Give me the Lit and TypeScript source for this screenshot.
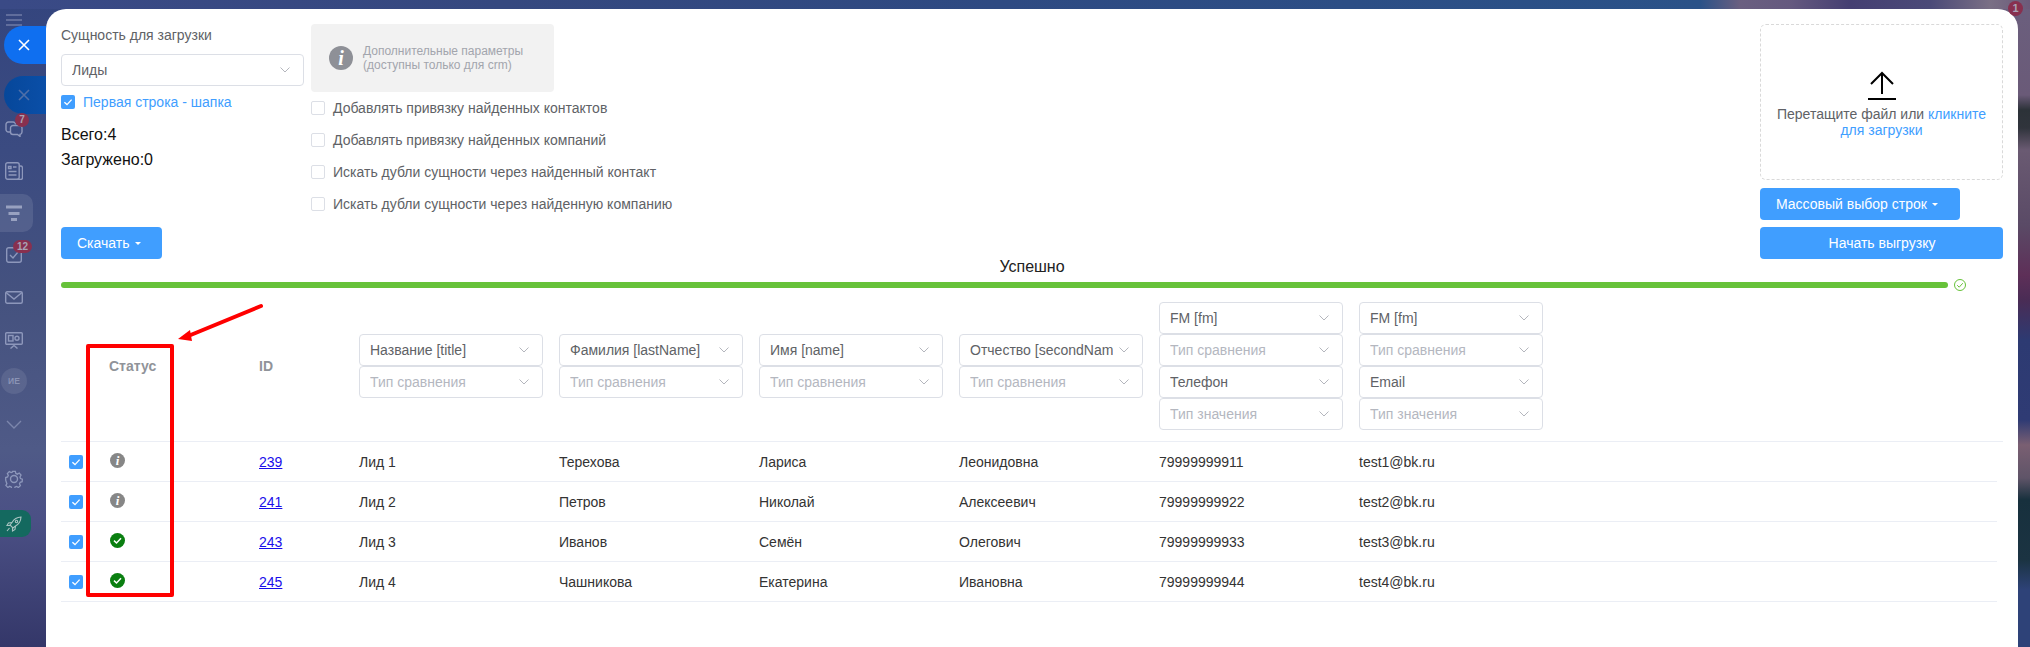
import { LitElement, html, css, svg } from "lit";
import { customElement } from "lit/decorators.js";

const chevron = html`<svg class="chev" width="10" height="6" viewBox="0 0 10 6"><path d="M.5.5 5 5 9.5.5" fill="none" stroke="#b4b6bd" stroke-width="1"/></svg>`;
const checkMark = html`<svg width="14" height="14" viewBox="0 0 14 14"><path d="M3.4 7.2 6 9.6l4.6-5" fill="none" stroke="#fff" stroke-width="1.3"/></svg>`;
const caret = html`<span class="caret"></span>`;

const sel = (text: string, ph = false) =>
  html`<div class="sel ${ph ? "ph" : ""}"><span class="sel-t">${text}</span>${chevron}</div>`;

const rows = [
  ["239", "Лид 1", "Терехова", "Лариса", "Леонидовна", "79999999911", "test1@bk.ru", "info"],
  ["241", "Лид 2", "Петров", "Николай", "Алексеевич", "79999999922", "test2@bk.ru", "info"],
  ["243", "Лид 3", "Иванов", "Семён", "Олегович", "79999999933", "test3@bk.ru", "ok"],
  ["245", "Лид 4", "Чашникова", "Екатерина", "Ивановна", "79999999944", "test4@bk.ru", "ok"],
];

const sideStroke = "#8d97bb";
const ic = (w: number, h: number, body: unknown) =>
  html`<svg width=${w} height=${h} viewBox="0 0 ${w} ${h}" fill="none" stroke=${sideStroke} stroke-width="1.4">${body}</svg>`;

@customElement("app-root")
export class AppRoot extends LitElement {
  static styles = css`
    :host {
      display: block;
      position: relative;
      width: 100%;
      height: 647px;
      overflow: hidden;
      font-family: "Liberation Sans", Arial, sans-serif;
      font-size: 14px;
      color: #606266;
      background:
        linear-gradient(90deg, #3a4a86 0, #35487f 500px, #2e4a82 1000px, #2a5288 1700px, #6a5f80 1740px, #65597f 1790px, #453f72 1850px, #4b4a78 1930px, #7a6f85 1990px, #6b5a7a 2030px) top / 100% 9px no-repeat,
        linear-gradient(180deg, #6b5f7e 0, #6a5a78 95px, #2c3238 110px, #30343c 128px, #6a5a72 150px, #5a4a66 225px, #5e2f58 275px, #4a2c55 300px, #2d3a72 340px, #2f3b74 420px, #7a5f72 445px, #5f5468 478px, #17303d 500px, #1b3342 560px, #2e4278 590px, #2e4278 647px) right top / 40px 100% no-repeat,
        linear-gradient(180deg, #34457e 0, #3b4b81 150px, #45527f 300px, #4f5a87 450px, #4b5085 520px, #343769 647px) left top / 80px 100% no-repeat,
        #30487f;
    }
    .wrap { display: flex; height: 647px; }

    /* sidebar */
    .side { width: 46px; flex: none; display: flex; flex-direction: column; align-items: flex-start; }
    .it { width: 28px; display: flex; align-items: center; justify-content: center; position: relative; flex: none; box-sizing: border-box; }
    .burger { margin-top: 14px; height: 12px; }
    .pill { width: 42px; height: 38px; margin-left: 4px; border-radius: 19px 0 0 19px; display: flex; align-items: center; justify-content: center; padding-right: 2px; box-sizing: border-box; flex: none; }
    .pill1 { background: #0f6ff0; }
    .pill2 { background: linear-gradient(90deg, #06479a, #0a4fa8); margin-top: 12px; }
    .i-chat { height: 30px; }
    .i-news { height: 50px; padding-top: 4px; }
    .tile { height: 38px; width: 33px; background: rgba(255, 255, 255, 0.1); border-radius: 0 10px 10px 0; display: flex; align-items: center; padding-left: 5px; box-sizing: border-box; flex: none; }
    .i-task { height: 46px; }
    .i-mail { height: 38px; }
    .i-board { height: 48px; }
    .avatar { width: 26px; height: 26px; margin: 4px 0 0 1px; border-radius: 50%; background: rgba(255, 255, 255, 0.09); color: #8a93b4; font-size: 8.5px; font-weight: 700; display: flex; align-items: center; justify-content: center; flex: none; }
    .i-chev { height: 60px; }
    .i-gear { height: 50px; }
    .rocket { width: 31px; height: 27px; margin-top: 6px; background: #14695f; border-radius: 0 9px 9px 0; display: flex; align-items: center; padding-left: 6px; box-sizing: border-box; flex: none; }
    .bdg { position: absolute; background: #88304f; color: #a9a3b5; border-radius: 8px; font-size: 10px; font-weight: 700; height: 14px; min-width: 14px; line-height: 14px; text-align: center; box-sizing: border-box; }
    .b7 { left: 15px; top: -1px; }
    .b12 { left: 13px; top: 8px; min-width: 19px; height: 13px; line-height: 13px; }
    .b1 { left: 2008px; top: 1px; width: 15px; height: 15px; line-height: 15px; border-radius: 50%; font-size: 11px; }

    /* panel */
    .panel {
      width: 1972px;
      flex: none;
      margin-top: 9px;
      height: 638px;
      background: #fff;
      border-radius: 20px 20px 0 0;
      padding: 15px 15px 0;
      box-sizing: border-box;
      position: relative;
    }
    .top { display: flex; height: 235px; }
    .c-left { width: 243px; display: flex; flex-direction: column; flex: none; }
    .c-mid { width: 420px; margin-left: 7px; flex: none; }
    .c-right { width: 243px; margin-left: auto; display: flex; flex-direction: column; flex: none; }
    .lbl { height: 22px; line-height: 22px; margin-bottom: 8px; }
    .sel {
      height: 32px;
      box-sizing: border-box;
      border: 1px solid #dcdfe6;
      border-radius: 4px;
      padding: 0 13px 0 10px;
      display: flex;
      align-items: center;
      justify-content: space-between;
      color: #606266;
      background: #fff;
    }
    .sel.ph { color: #b4b7bf; }
    .sel-t { width: 143px; overflow: hidden; white-space: nowrap; }
    .chev { flex: none; }
    .cb { width: 14px; height: 14px; box-sizing: border-box; border: 1px solid #dcdfe6; border-radius: 2px; background: #fff; flex: none; display: block; }
    .cb.on { background: #409eff; border: none; }
    .head-cb { display: flex; align-items: center; gap: 8px; margin-top: 9px; height: 14px; color: #409eff; }
    .stat { font-size: 16px; color: #111; line-height: 25px; }
    .stats { margin-top: 13px; }
    .btn { height: 32px; box-sizing: border-box; border-radius: 4px; background: #409eff; color: #fff; display: flex; align-items: center; flex: none; }
    .b-dl { margin-top: auto; width: 101px; padding-left: 16px; }
    .b-mass { width: 200px; padding-left: 16px; margin-top: 8px; }
    .b-start { justify-content: center; margin-top: 7px; padding-left: 1px; }
    .caret { width: 0; height: 0; border-left: 3px solid transparent; border-right: 3px solid transparent; border-top: 3px solid #fff; margin-left: 5px; }
    .info {
      width: 243px; height: 68px; background: #f2f2f2; border-radius: 4px;
      display: flex; align-items: center; padding-left: 18px; box-sizing: border-box; gap: 10px;
      font-size: 12px; line-height: 14px; color: #a2a5ad;
    }
    .ibig { width: 24px; height: 24px; border-radius: 50%; background: #8e9097; color: #fff; font: italic 700 20px/24px "Liberation Serif", serif; text-align: center; flex: none; }
    .chk { height: 32px; display: flex; align-items: center; gap: 8px; white-space: nowrap; }
    .drop {
      height: 156px; border: 1px dashed #d9d9d9; border-radius: 6px; box-sizing: border-box;
      display: flex; flex-direction: column; align-items: center; padding: 45px 10px 0; text-align: center; line-height: 16px;
    }
    .drop svg { margin-bottom: 6px; display: block; flex: none; }
    .lnk { color: #409eff; }
    .ptext { text-align: center; color: #222; line-height: 16px; height: 16px; font-size: 16px; }
    .prog { display: flex; align-items: center; margin-top: 7px; height: 6px; }
    .bar { width: 1887px; height: 6px; border-radius: 3px; background: #67c23a; flex: none; }
    .prog svg { margin-left: 6px; overflow: visible; }

    .hdr, .row { display: grid; grid-template-columns: 48px 150px 100px repeat(5, 200px) 1fr; align-items: center; }
    .hdr { padding: 14px 0 11px; border-bottom: 1px solid #ebeef5; }
    .ht { font-weight: 700; color: #909399; }
    .stack { width: 184px; }
    .row { height: 40px; box-sizing: border-box; border-bottom: 1px solid #ebeef5; margin-right: 6px; color: #333; }
    .row .cb { margin-left: 8px; margin-top: 1px; }
    .st { width: 15px; height: 15px; border-radius: 50%; margin: 0 0 3px 1px; display: flex; align-items: center; justify-content: center; }
    .st.info-i { background: #868686; color: #fff; font: italic 700 13px/15px "Liberation Serif", serif; }
    .st.ok { background: #0a7f10; }
    a { color: #1a0dea; text-decoration: underline; }

    .redbox { position: absolute; left: 86px; top: 344px; width: 88px; height: 253px; border: 4px solid #f00; border-radius: 2px; box-sizing: border-box; }
    .arrow { position: absolute; left: 170px; top: 300px; }
  `;

  render() {
    return html`
      <div class="wrap">
        <aside class="side">
          <div class="it burger">
            ${ic(16, 12, svg`<path d="M0 1h16M0 6h16M0 11h16" stroke="#6f7ba6"/>`)}
          </div>
          <div class="pill pill1">
            <svg width="12" height="12" viewBox="0 0 12 12"><path d="M1 1l10 10M11 1 1 11" stroke="#fff" stroke-width="1.6"/></svg>
          </div>
          <div class="pill pill2">
            <svg width="12" height="12" viewBox="0 0 12 12"><path d="M1 1l10 10M11 1 1 11" stroke="#4f6fa8" stroke-width="1.6"/></svg>
          </div>
          <div class="it i-chat">
            ${ic(18, 16, svg`<path d="M5 11H3.500A2.500 2.500 0 0 1 1 8.500V3.500A2.500 2.500 0 0 1 3.500 1H8a2.500 2.500 0 0 1 2.500 2.500"/><path d="M8 4.500h6.500a2.500 2.500 0 0 1 2.500 2.500v4a2.500 2.500 0 0 1-2 2.400V15.500l-2.500-2H8a2.500 2.500 0 0 1-2.500-2.500V7A2.500 2.500 0 0 1 8 4.500z"/>`)}
            <span class="bdg b7">7</span>
          </div>
          <div class="it i-news">
            ${ic(18, 18, svg`<rect x=".7" y=".7" width="13.500" height="16.600" rx="2"/><path d="M14.200 4h1.300a2 2 0 0 1 2 2v9.500a2 2 0 0 1-2 2H12M3.500 4.500h2.500v2H3.500zM8 5h3.500M3.500 9.500h8M3.500 13h8"/>`)}
          </div>
          <div class="tile">
            <svg width="18" height="16" viewBox="0 0 18 16"><path d="M1 2h16M3.500 8.500h11M6 14.500h6" stroke="#98a1c0" stroke-width="3"/></svg>
          </div>
          <div class="it i-task">
            ${ic(16, 16, svg`<rect x=".7" y=".7" width="14.600" height="14.600" rx="2"/><path d="M4 8l3 3 5-6"/>`)}
            <span class="bdg b12">12</span>
          </div>
          <div class="it i-mail">
            ${ic(18, 13, svg`<rect x=".7" y=".7" width="16.600" height="11.600" rx="1.500"/><path d="M1 1.500 9 8l8-6.500"/>`)}
          </div>
          <div class="it i-board">
            ${ic(18, 17, svg`<rect x=".7" y=".7" width="16.600" height="11.600" rx="1"/><rect x="3.500" y="3.500" width="4.500" height="5.500"/><circle cx="12" cy="6.300" r="2"/><path d="M9 12.500v1M5.500 16.500 9 13.500l3.500 3"/>`)}
          </div>
          <div class="avatar">ИЕ</div>
          <div class="it i-chev">
            ${ic(16, 9, svg`<path d="M1 1l7 7 7-7" stroke="#7c86ac"/>`)}
          </div>
          <div class="it i-gear">
            ${ic(18, 18, svg`<circle cx="9" cy="9" r="3.500"/><path d="M7.500 1h3l.5 2.300 1.700.8 2-1.200 2 2.300-1.200 2 .6 1.600 2 .7l-.2 2.800-2.100.6-.8 1.700 1 2-2.200 2-1.900-1.200-1.700.6-.6 2.100h-3l-.6-2.100-1.700-.7-1.900 1.200-2.200-2.100 1.100-2-.7-1.700L0 10.500V7.800l2.100-.7.700-1.700-1-2 2.100-2.100 2 1.100 1.200-.5z" transform="translate(0.700 0.400) scale(.92)"/>`)}
          </div>
          <div class="rocket">
            <svg width="16" height="16" viewBox="0 0 16 16" fill="none" stroke="#a9c4c2" stroke-width="1.100"><path d="M15 1c-4 .2-7 2-9 5.500L4 9l3 3 2.500-2C13 8 14.800 5 15 1z"/><circle cx="10.500" cy="5.500" r="1.200"/><path d="M6 6.500 2.500 7 1 9.500 4 9.500M9.500 10 9 13.500 6.500 15V12M3.500 12 1 15"/></svg>
          </div>
        </aside>

        <main class="panel">
          <div class="top">
            <div class="c-left">
              <div class="lbl">Сущность для загрузки</div>
              ${sel("Лиды")}
              <div class="head-cb"><span class="cb on">${checkMark}</span>Первая строка - шапка</div>
              <div class="stats">
                <div class="stat">Всего:4</div>
                <div class="stat">Загружено:0</div>
              </div>
              <div class="btn b-dl">Скачать${caret}</div>
            </div>
            <div class="c-mid">
              <div class="info"><span class="ibig">i</span><div>Дополнительные параметры<br />(доступны только для crm)</div></div>
              ${["Добавлять привязку найденных контактов", "Добавлять привязку найденных компаний", "Искать дубли сущности через найденный контакт", "Искать дубли сущности через найденную компанию"].map(
                (t) => html`<div class="chk"><span class="cb"></span>${t}</div>`
              )}
            </div>
            <div class="c-right">
              <div class="drop">
                <svg width="30" height="30" viewBox="0 0 30 30" fill="none" stroke="#000" stroke-width="2"><path d="M15 3v21M4 14 15 3l11 11"/><path d="M1 29h28"/></svg>
                <div>Перетащите файл или <span class="lnk">кликните для загрузки</span></div>
              </div>
              <div class="btn b-mass">Массовый выбор строк${caret}</div>
              <div class="btn b-start">Начать выгрузку</div>
            </div>
          </div>

          <div class="ptext">Успешно</div>
          <div class="prog">
            <div class="bar"></div>
            <svg width="12" height="12" viewBox="0 0 12 12" fill="none" stroke="#67c23a"><circle cx="6" cy="6" r="5.500"/><path d="M3.200 6.200 5.200 8.200 8.800 4.200"/></svg>
          </div>

          <div class="hdr">
            <span></span>
            <span class="ht">Статус</span>
            <span class="ht">ID</span>
            <div class="stack">${sel("Название [title]")}${sel("Тип сравнения", true)}</div>
            <div class="stack">${sel("Фамилия [lastName]")}${sel("Тип сравнения", true)}</div>
            <div class="stack">${sel("Имя [name]")}${sel("Тип сравнения", true)}</div>
            <div class="stack">${sel("Отчество [secondName]")}${sel("Тип сравнения", true)}</div>
            <div class="stack">${sel("FM [fm]")}${sel("Тип сравнения", true)}${sel("Телефон")}${sel("Тип значения", true)}</div>
            <div class="stack">${sel("FM [fm]")}${sel("Тип сравнения", true)}${sel("Email")}${sel("Тип значения", true)}</div>
          </div>
          ${rows.map(
            (r) => html`<div class="row">
              <span class="cb on">${checkMark}</span>
              ${r[7] === "ok"
                ? html`<span class="st ok"><svg width="11" height="11" viewBox="0 0 11 11"><path d="M2 5.600 4.500 8 9 3.200" fill="none" stroke="#fff" stroke-width="1.500"/></svg></span>`
                : html`<span class="st info-i">i</span>`}
              <span><a href="#">${r[0]}</a></span>
              <span>${r[1]}</span><span>${r[2]}</span><span>${r[3]}</span><span>${r[4]}</span><span>${r[5]}</span><span>${r[6]}</span>
            </div>`
          )}
        </main>
      </div>

      <span class="bdg b1">1</span>
      <div class="redbox"></div>
      <svg class="arrow" width="100" height="50" viewBox="0 0 100 50">
        <path d="M91 6 17 36.500" stroke="#f00" stroke-width="4" stroke-linecap="round"/>
        <path d="M8 39 20 30 22 41z" fill="#f00"/>
      </svg>
    `;
  }
}
